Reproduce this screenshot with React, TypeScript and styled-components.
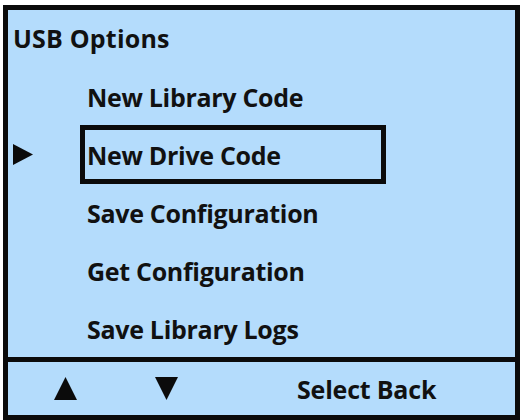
import React from "react";
import styled, { createGlobalStyle } from "styled-components";

const Global = createGlobalStyle`
  html, body { margin: 0; padding: 0; background: #ffffff; }
  body { font-family: "Open Sans", "Lato", sans-serif; }
  * { box-sizing: border-box; }
`;

const Page = styled.div`
  width: 520px;
  height: 420px;
  padding: 5px 0 0 3px;
`;

const Screen = styled.div`
  width: 517px;
  height: 415px;
  border: 5px solid #0b0b0b;
  background: #b4dcfc;
  display: grid;
  grid-template-rows: 347px 1fr;
  color: #111;
  font-weight: 700;
`;

const Main = styled.div`
  display: flex;
  flex-direction: column;
`;

const Title = styled.div`
  height: 64px;
  display: flex;
  align-items: center;
  padding: 0 0 2px 5px;
  font-size: 25px;
  letter-spacing: 0.2px;
`;

const Menu = styled.ul`
  list-style: none;
  margin: 0;
  padding: 0;
`;

const Row = styled.li`
  height: 58px;
  display: grid;
  grid-template-columns: 72px auto;
  align-items: center;
`;

const Marker = styled.div`
  padding-left: 5px;
  display: flex;
  align-items: center;
`;

const Label = styled.div<{ $selected?: boolean }>`
  width: 306px;
  height: 59px;
  border: 5px solid ${(p) => (p.$selected ? "#0b0b0b" : "transparent")};
  padding-left: 2px;
  display: flex;
  align-items: center;
  font-size: 25px;
  letter-spacing: -0.3px;
  white-space: nowrap;
`;

const Footer = styled.div`
  border-top: 5px solid #0b0b0b;
  display: grid;
  grid-template-columns: 101px 142px 1fr;
  align-items: center;
  padding-left: 46px;
  font-size: 25px;
  letter-spacing: -0.2px;
`;

const Key = styled.div`
  display: flex;
  align-items: center;
`;

const items = [
  "New Library Code",
  "New Drive Code",
  "Save Configuration",
  "Get Configuration",
  "Save Library Logs",
];

const selectedIndex = 1;

export default function App() {
  return (
    <>
      <Global />
      <Page>
        <Screen>
          <Main>
            <Title>USB Options</Title>
            <Menu>
              {items.map((t, i) => (
                <Row key={t}>
                  <Marker>
                    {i === selectedIndex && (
                      <svg width="20" height="21" viewBox="0 0 20 21">
                        <polygon points="0,0 20,10.5 0,21" fill="#0b0b0b" />
                      </svg>
                    )}
                  </Marker>
                  <Label $selected={i === selectedIndex}>{t}</Label>
                </Row>
              ))}
            </Menu>
          </Main>
          <Footer>
            <Key>
              <svg width="23" height="23" viewBox="0 0 23 23">
                <polygon points="11.5,0 23,23 0,23" fill="#0b0b0b" />
              </svg>
            </Key>
            <Key>
              <svg width="23" height="23" viewBox="0 0 23 23">
                <polygon points="0,0 23,0 11.5,23" fill="#0b0b0b" />
              </svg>
            </Key>
            <Key>Select Back</Key>
          </Footer>
        </Screen>
      </Page>
    </>
  );
}
